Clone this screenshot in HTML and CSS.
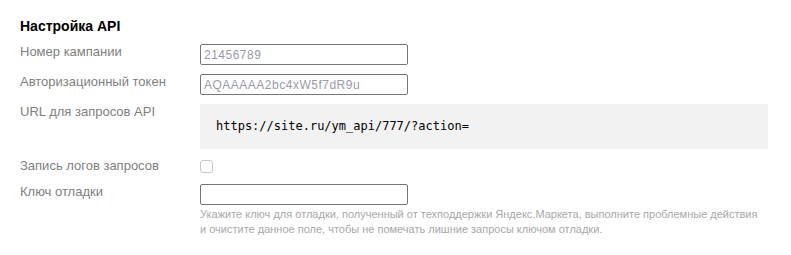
FILE: index.html
```html
<!DOCTYPE html>
<html lang="ru">
<head>
  <meta charset="UTF-8" />
  <title>Настройка API</title>
  <link rel="stylesheet" href="styles.css">
</head>
<body>
  <div class="settings">
    <h2>Настройка API</h2>
    <div class="row">
      <label for="campaign">Номер кампании</label>
      <div class="field"><input type="text" id="campaign" value="21456789" /></div>
    </div>
    <div class="row">
      <label for="token">Авторизационный токен</label>
      <div class="field"><input type="text" id="token" value="AQAAAAA2bc4xW5f7dR9u" /></div>
    </div>
    <div class="row">
      <label>URL для запросов API</label>
      <div class="field"><pre class="code">https://site.ru/ym_api/777/?action=</pre></div>
    </div>
    <div class="row row-check">
      <label for="log">Запись логов запросов</label>
      <div class="field"><input type="checkbox" id="log" /></div>
    </div>
    <div class="row">
      <label for="debug">Ключ отладки</label>
      <div class="field">
        <input type="text" id="debug" />
        <p class="hint">Укажите ключ для отладки, полученный от техподдержки Яндекс.Маркета, выполните проблемные действия и очистите данное поле, чтобы не помечать лишние запросы ключом отладки.</p>
      </div>
    </div>
  </div>
</body>
</html>
```

FILE: styles.css
```css
body {
  font-family: "Liberation Sans", Arial, sans-serif;
  background: #fff;
  margin: 0;
  padding: 18px 20px;
}
.settings {
  display: flex;
  flex-direction: column;
  gap: 9px;
  width: 748px;
}
h2 {
  margin: 0 0 1px 0;
  font-size: 14px;
  line-height: 16px;
  font-weight: bold;
  color: #000;
}
.row {
  display: grid;
  grid-template-columns: 180px 568px;
}
.row label {
  font-size: 13px;
  line-height: 15px;
  color: #808080;
}
.row-check {
  min-height: 17px;
}
input[type="text"] {
  box-sizing: border-box;
  display: block;
  width: 208px;
  height: 21px;
  margin: 0;
  padding: 0 3px;
  border: 1px solid #767676;
  border-radius: 2px;
  font-family: "Liberation Sans", Arial, sans-serif;
  font-size: 12px;
  color: #9a9aa8;
  letter-spacing: 0.5px;
}
input[type="checkbox"] {
  appearance: none;
  display: block;
  width: 13px;
  height: 13px;
  margin: 2px 0 0 0;
  border: 1px solid #c8c8c8;
  border-radius: 3px;
  background: #fff;
}
.code {
  margin: 0;
  height: 45px;
  line-height: 45px;
  padding: 0 16px;
  background: #f2f2f2;
  font-family: "DejaVu Sans Mono", monospace;
  font-size: 12px;
  color: #000;
}
.hint {
  max-width: 560px;
  margin: 2px 0 0 0;
  font-size: 11px;
  line-height: 15px;
  color: #a8a8a8;
}
```
